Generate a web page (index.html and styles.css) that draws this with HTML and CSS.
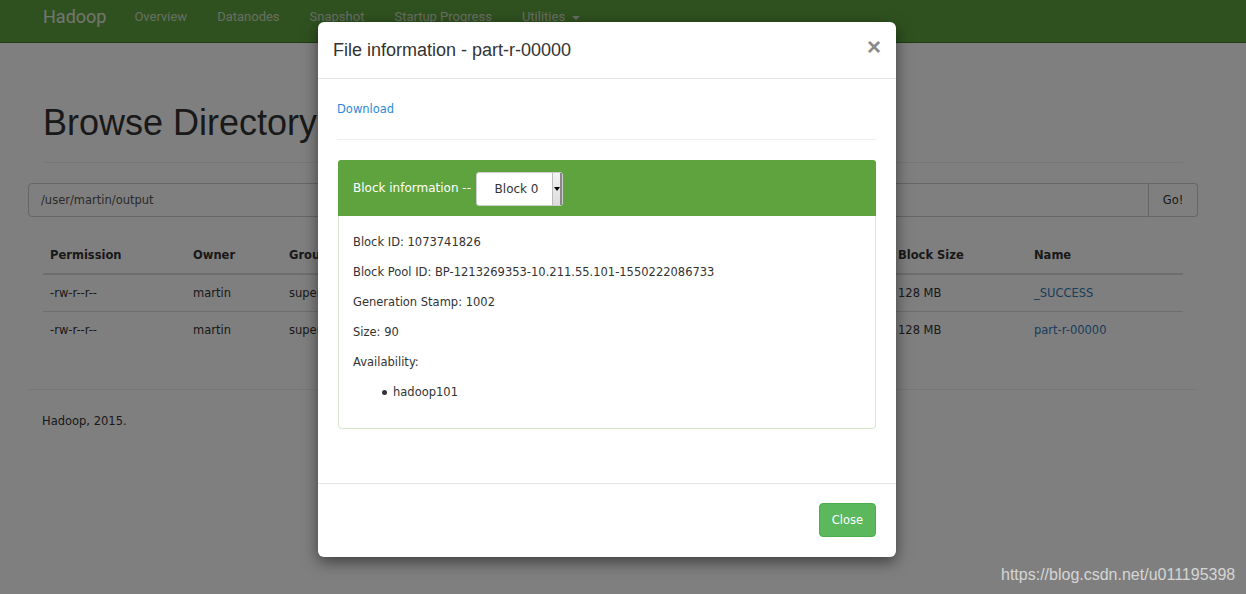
FILE: index.html
```html
<!DOCTYPE html>
<html>
<head>
<meta charset="utf-8">
<link rel="stylesheet" href="styles.css">
</head>
<body>
<nav class="navbar">
  <a class="brand">Hadoop</a>
  <a class="nav-link">Overview</a>
  <a class="nav-link">Datanodes</a>
  <a class="nav-link">Snapshot</a>
  <a class="nav-link">Startup Progress</a>
  <a class="nav-link">Utilities <span class="caret"></span></a>
</nav>
<main class="page">
  <h1 class="title">Browse Directory</h1>
  <hr class="title-rule">
  <div class="search">
    <div class="search-input">/user/martin/output</div>
    <div class="search-btn">Go!</div>
  </div>
  <table class="files">
    <thead>
      <tr><th class="c-perm">Permission</th><th class="c-own">Owner</th><th class="c-grp">Group</th><th class="c-size">Size</th><th class="c-mod">Last Modified</th><th class="c-rep">Replication</th><th class="c-bs">Block Size</th><th class="c-name">Name</th></tr>
    </thead>
    <tbody>
      <tr><td>-rw-r--r--</td><td>martin</td><td>supergroup</td><td></td><td></td><td></td><td>128 MB</td><td><a class="file-link">_SUCCESS</a></td></tr>
      <tr><td>-rw-r--r--</td><td>martin</td><td>supergroup</td><td></td><td></td><td></td><td>128 MB</td><td><a class="file-link">part-r-00000</a></td></tr>
    </tbody>
  </table>
  <hr class="foot-rule">
  <footer class="footer">Hadoop, 2015.</footer>
</main>
<div class="backdrop"></div>
<div class="watermark">https://blog.csdn.net/u011195398</div>
<div class="modal">
  <div class="modal-header">
    <h4 class="modal-title">File information - part-r-00000</h4>
    <span class="close">×</span>
  </div>
  <div class="modal-body">
    <a class="download">Download</a>
    <hr class="modal-rule">
    <div class="panel">
      <div class="panel-heading">
        <span>Block information --</span>
        <div class="select"><span class="select-text">Block 0</span><span class="select-arrow"></span></div>
      </div>
      <div class="panel-body">
        <p>Block ID: 1073741826</p>
        <p>Block Pool ID: BP-1213269353-10.211.55.101-1550222086733</p>
        <p>Generation Stamp: 1002</p>
        <p>Size: 90</p>
        <p>Availability:</p>
        <ul><li>hadoop101</li></ul>
      </div>
    </div>
  </div>
  <div class="modal-footer">
    <button class="btn-close">Close</button>
  </div>
</div>
</body>
</html>
```
FILE: styles.css
```css
* { box-sizing: border-box; }
html, body { margin: 0; padding: 0; }
body {
  width: 1246px;
  height: 594px;
  overflow: hidden;
  background: #fff;
  font-family: "DejaVu Sans", sans-serif;
  font-size: 11.5px;
  color: #333;
  position: relative;
}
.navbar {
  height: 43px;
  background: #5fa33e;
  border-bottom: 1px solid #3e7a22;
  display: flex;
  align-items: flex-start;
  padding: 6px 0 0 43px;
}
.brand {
  font-family: "Roboto", "Liberation Sans", sans-serif;
  font-size: 18px;
  line-height: 22px;
  color: #e4ece0;
  margin-right: 28px;
}
.nav-link {
  font-family: "Roboto", "Liberation Sans", sans-serif;
  font-size: 13px;
  line-height: 22px;
  color: #d0dcc8;
  margin-right: 30px;
}
.caret {
  display: inline-block;
  width: 0; height: 0;
  border-left: 4px solid transparent;
  border-right: 4px solid transparent;
  border-top: 4px solid #d0dcc8;
  vertical-align: middle;
  margin-left: 4px;
}
.page { padding: 0 63px 0 43px; }
.title {
  font-family: "Liberation Sans", sans-serif;
  font-weight: 500;
  font-size: 36px;
  color: #333;
  margin: 59px 0 0 0;
  line-height: 42px;
}
.title-rule {
  border: 0;
  border-top: 1px solid #eee;
  margin: 18px 0 20px 0;
}
.search {
  display: flex;
  margin-left: -15px;
  margin-right: -15px;
  height: 34px;
}
.search-input {
  flex: 1;
  border: 1px solid #ccc;
  border-radius: 4px 0 0 4px;
  padding: 0 12px;
  line-height: 32px;
  color: #555;
}
.search-btn {
  width: 49px;
  border: 1px solid #ccc;
  border-left: 0;
  border-radius: 0 4px 4px 0;
  line-height: 32px;
  text-align: center;
  color: #333;
}
.files {
  width: 100%;
  border-collapse: collapse;
  margin-top: 21px;
}
.files th {
  text-align: left;
  font-weight: bold;
  padding: 8px 7px 9px 7px;
  line-height: 18px;
  border-bottom: 2px solid #ddd;
}
.files td {
  padding: 9px 7px;
  line-height: 18px;
  height: 37px;
  border-top: 1px solid #ddd;
}
.c-perm { width: 143px; }
.c-own { width: 96px; }
.c-grp { width: 120px; }
.c-size { width: 100px; }
.c-mod { width: 160px; }
.c-rep { width: 229px; }
.c-bs { width: 136px; }
.file-link { color: #337ab7; }
.foot-rule {
  border: 0;
  border-top: 1px solid #eee;
  margin: 40px -15px 0 -15px;
}
.footer { padding-top: 21px; line-height: 20px; margin-left: -1px; }
.backdrop {
  position: absolute;
  inset: 0;
  background: rgba(0,0,0,0.5);
}
.watermark {
  position: absolute;
  left: 1001px;
  top: 566px;
  font-family: "Liberation Sans", sans-serif;
  font-size: 16px;
  color: #e4e4e4;
  opacity: 0.85;
}
.modal {
  position: absolute;
  left: 318px;
  top: 22px;
  width: 578px;
  background: #fff;
  border-radius: 6px;
  box-shadow: 0 5px 15px rgba(0,0,0,.5);
}
.modal-header {
  height: 57px;
  border-bottom: 1px solid #e5e5e5;
  display: flex;
  align-items: center;
  justify-content: space-between;
  padding: 0 15px;
}
.modal-title {
  margin: 0;
  font-family: "Liberation Sans", sans-serif;
  font-weight: normal;
  font-size: 18px;
  color: #333;
}
.close {
  font-family: "Liberation Sans", sans-serif;
  font-size: 24px;
  font-weight: bold;
  color: #8a8a8a;
  line-height: 1;
  margin-top: -6px;
  margin-right: 0;
}
.modal-body { padding: 20px 20px 34px 19px; }
.download {
  display: block;
  color: #2a8bd8;
  line-height: 20px;
}
.modal-rule {
  border: 0;
  border-top: 1px solid #eee;
  margin: 20px 0 20px 0;
}
.panel {
  margin-left: 1px;
  border: 1px solid #d6e9c6;
  border-radius: 4px;
  margin-bottom: 20px;
}
.panel-heading {
  background: #5fa33e;
  color: #fff;
  height: 56px;
  display: flex;
  align-items: center;
  padding: 0 15px;
  font-size: 12px;
  border-radius: 3px 3px 0 0;
  margin: -1px -1px 0 -1px;
}
.select {
  margin-left: 5px;
  width: 87px;
  height: 34px;
  background: #fff;
  border: 1px solid #ccc;
  border-radius: 3px;
  display: flex;
  align-items: center;
  color: #333;
  font-size: 12px;
  margin-top: 1px;
}
.select-text { flex: 1; text-align: center; padding-left: 4px; }
.select-arrow {
  width: 10px;
  height: 100%;
  background: linear-gradient(#f4f4f4, #dcdcdc);
  border-left: 1px solid #bbb;
  border-right: 2px solid #888;
  position: relative;
}
.select-arrow::after {
  content: "";
  position: absolute;
  left: 1px; top: 14px;
  border-left: 3px solid transparent;
  border-right: 3px solid transparent;
  border-top: 4px solid #000;
}
.panel-body { padding: 16px 14px 16px 14px; }
.panel-body p { margin: 0 0 10px 0; line-height: 20px; }
.panel-body ul { margin: 0 0 10px 0; padding-left: 40px; line-height: 20px; list-style: none; }
.panel-body li { position: relative; }
.panel-body li::before {
  content: "";
  position: absolute;
  left: -11px;
  top: 8px;
  width: 5px;
  height: 5px;
  border-radius: 50%;
  background: #333;
}
.modal-footer {
  border-top: 1px solid #e5e5e5;
  padding: 19px 20px 20px 20px;
  display: flex;
  justify-content: flex-end;
}
.btn-close {
  width: 57px;
  height: 34px;
  background: #5cb85c;
  border: 1px solid #4cae4c;
  border-radius: 4px;
  color: #fff;
  font-family: "DejaVu Sans", sans-serif;
  font-size: 11.5px;
}
```
